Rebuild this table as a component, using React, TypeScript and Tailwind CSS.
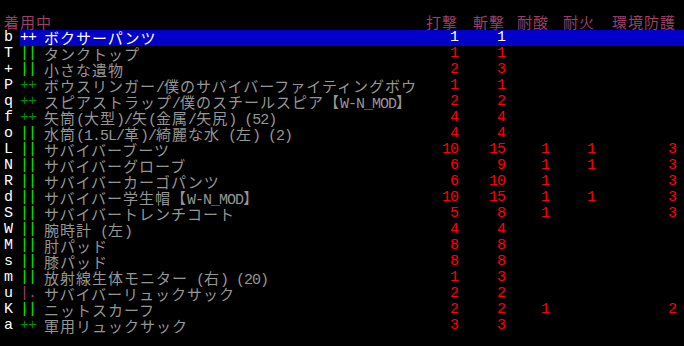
import React from "react";

type Row = {
  k: string;
  m: string;
  mc: string;
  name: string;
  v: string[];
  sel?: boolean;
};

const G = "text-[#00f000]";
const DG = "text-[#008c00]";

const rows: Row[] = [
  { k: "b", m: "++", mc: "text-white", name: "ボクサーパンツ", v: ["1", "1", "", "", ""], sel: true },
  { k: "T", m: "||", mc: G, name: "タンクトップ", v: ["1", "1", "", "", ""] },
  { k: "+", m: "||", mc: G, name: "小さな遺物", v: ["2", "3", "", "", ""] },
  { k: "P", m: "++", mc: DG, name: "ボウスリンガー/僕のサバイバーファイティングボウ", v: ["1", "1", "", "", ""] },
  { k: "q", m: "++", mc: DG, name: "スピアストラップ/僕のスチールスピア【W-N_MOD】", v: ["2", "2", "", "", ""] },
  { k: "f", m: "++", mc: DG, name: "矢筒(大型)/矢(金属/矢尻) (52)", v: ["4", "4", "", "", ""] },
  { k: "o", m: "||", mc: G, name: "水筒(1.5L/革)/綺麗な水 (左) (2)", v: ["4", "4", "", "", ""] },
  { k: "L", m: "||", mc: G, name: "サバイバーブーツ", v: ["10", "15", "1", "1", "3"] },
  { k: "N", m: "||", mc: G, name: "サバイバーグローブ", v: ["6", "9", "1", "1", "3"] },
  { k: "R", m: "||", mc: G, name: "サバイバーカーゴパンツ", v: ["6", "10", "1", "", "3"] },
  { k: "d", m: "||", mc: G, name: "サバイバー学生帽【W-N_MOD】", v: ["10", "15", "1", "1", "3"] },
  { k: "S", m: "||", mc: G, name: "サバイバートレンチコート", v: ["5", "8", "1", "", "3"] },
  { k: "W", m: "||", mc: G, name: "腕時計 (左)", v: ["4", "4", "", "", ""] },
  { k: "M", m: "||", mc: G, name: "肘パッド", v: ["8", "8", "", "", ""] },
  { k: "s", m: "||", mc: G, name: "膝パッド", v: ["8", "8", "", "", ""] },
  { k: "m", m: "||", mc: G, name: "放射線生体モニター (右) (20)", v: ["1", "3", "", "", ""] },
  { k: "u", m: "|.", mc: "text-[#9c3f68]", name: "サバイバーリュックサック", v: ["2", "2", "", "", ""] },
  { k: "K", m: "||", mc: G, name: "ニットスカーフ", v: ["2", "2", "1", "", "2"] },
  { k: "a", m: "++", mc: DG, name: "軍用リュックサック", v: ["3", "3", "", "", ""] },
];

const colW = ["w-[40px]", "w-[47px]", "w-[44px]", "w-[46px]", "w-[81px]"];
const heads = ["打撃", "斬撃", "耐酸", "耐火", "環境防護"];

function Txt({ s }: { s: string }) {
  const parts = s.match(/[\x00-\x7f]+|[^\x00-\x7f]+/g) || [];
  return (
    <>
      {parts.map((p, i) =>
        /^[\x00-\x7f]/.test(p) ? (
          <span key={i} className="font-['Liberation_Mono',monospace] text-[15px] tracking-[-1px] leading-4 whitespace-pre">
            {p}
          </span>
        ) : (
          <span key={i} className="font-['Noto_Sans_CJK_JP',sans-serif] text-[15px] tracking-[1px] leading-4 whitespace-pre">
            {p}
          </span>
        )
      )}
    </>
  );
}

export default function App() {
  return (
    <div className="w-[684px] h-[346px] bg-black pt-[14px] overflow-hidden font-['Liberation_Mono',monospace] text-[15px] tracking-[-1px] leading-4">
      <div className="flex h-4 text-[#9c3f68]">
        <div className="w-[418px] pl-[4px] whitespace-nowrap">
          <Txt s="着用中" />
        </div>
        {heads.map((h, i) => (
          <div key={i} className={`${colW[i]} text-right whitespace-nowrap`}>
            <Txt s={h} />
          </div>
        ))}
        <div className="flex-1" />
      </div>
      {rows.map((r, idx) => (
        <div key={idx} className="flex h-4">
          <div className="w-[20px] pl-[4px] text-white">{r.k}</div>
          <div className={`flex flex-1 h-4 ${r.sel ? "bg-[#0000c8]" : ""}`}>
            <div className={`w-[24px] whitespace-pre ${r.mc}`}>
              {r.m === "|." ? (
                <>
                  <span>|</span>
                  <span>.</span>
                </>
              ) : (
                r.m
              )}
            </div>
            <div className={`w-[374px] whitespace-nowrap ${r.sel ? "text-white" : "text-[#969696]"}`}>
              <Txt s={r.name} />
            </div>
            {r.v.map((v, i) => (
              <div key={i} className={`${colW[i]} text-right ${r.sel ? "text-white" : "text-[#ff0000]"}`}>
                {v}
              </div>
            ))}
            <div className="flex-1" />
          </div>
        </div>
      ))}
    </div>
  );
}
